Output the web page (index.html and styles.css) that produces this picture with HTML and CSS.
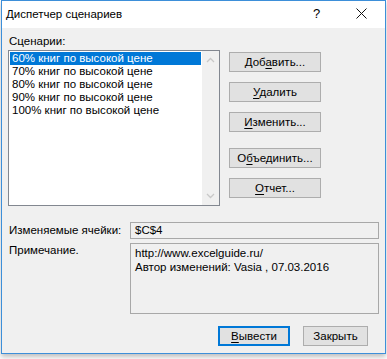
FILE: index.html
```html
<!DOCTYPE html>
<html lang="ru">
<head>
	<meta charset="UTF-8">
	<title>Диспетчер сценариев</title>
	<link rel="stylesheet" href="styles.css">
</head>
<body>
	<div class="window">
		<div class="titlebar">
			<span class="title">Диспетчер сценариев</span>
			<span class="help">?</span>
			<span class="close">
				<svg width="11" height="11" viewBox="0 0 11 11"><path d="M0.5 0.5L10.5 10.5M10.5 0.5L0.5 10.5" stroke="#111" stroke-width="1" fill="none"/></svg>
			</span>
		</div>
		<div class="content">
			<div class="top">
				<div class="scen">
					<div class="label">Сценарии:</div>
					<div class="listbox">
						<ul class="items">
							<li class="selected">60% книг по высокой цене</li>
							<li>70% книг по высокой цене</li>
							<li>80% книг по высокой цене</li>
							<li>90% книг по высокой цене</li>
							<li>100% книг по высокой цене</li>
						</ul>
						<div class="scrollbar">
							<svg width="9" height="6" viewBox="0 0 9 6"><path d="M1 5L4.5 1.5L8 5" stroke="#c8c8c8" stroke-width="1.3" fill="none"/></svg>
							<svg width="9" height="6" viewBox="0 0 9 6"><path d="M1 1L4.5 4.5L8 1" stroke="#c8c8c8" stroke-width="1.3" fill="none"/></svg>
						</div>
					</div>
				</div>
				<div class="side-buttons">
					<button type="button">Доб<u>а</u>вить...</button>
					<button type="button"><u>У</u>далить</button>
					<button type="button"><u>И</u>зменить...</button>
					<button type="button" class="sep">О<u>б</u>ъединить...</button>
					<button type="button"><u>О</u>тчет...</button>
				</div>
			</div>
			<div class="field-row">
				<div class="field-label">Изменяемые ячейки:</div>
				<div class="field">$C$4</div>
			</div>
			<div class="field-row notes">
				<div class="field-label">Примечание.</div>
				<div class="field big">http://www.excelguide.ru/<br>Автор изменений: Vasia , 07.03.2016</div>
			</div>
			<div class="footer">
				<button type="button" class="default"><u>В</u>ывести</button>
				<button type="button" class="close-btn">Закрыть</button>
			</div>
		</div>
	</div>
</body>
</html>
```
FILE: styles.css
```css
/* Reset */
body,div,ul,li,span{ margin:0; padding:0;}
ul{ list-style:none;}
body{ background:#fff; font-family:"Liberation Sans",Arial,sans-serif; font-size:11.5px; color:#000; height:359px; overflow:hidden;}
u{ text-decoration:underline; text-underline-offset:2px;}

/* окно */
.window{
	margin-left: 1px;
	width: 385px;
	height: 354px;
	box-sizing: border-box;
	border: 1px solid #3d8fd9;
	background-color: #f0f0f0;
	box-shadow: 0 3px 5px rgba(0,0,0,0.25);
	display: flex;
	flex-direction: column;
}
.titlebar{
	height: 27px;
	background-color: #fff;
	display: flex;
	align-items: center;
	padding-left: 4px;
}
.title{
	flex: 1;
	line-height: 15px;
	padding-bottom: 1px;
}
.help{
	width: 10px;
	margin-right: 33px;
	font-size: 13px;
	padding-bottom: 2px;
}
.close{
	width: 11px;
	height: 11px;
	margin-right: 18px;
	margin-bottom: 2px;
	display: flex;
}
.content{
	flex: 1;
	padding: 6px 6px 0 6px;
}
/* верхняя часть */
.top{
	display: flex;
}
.label{
	line-height: 15px;
	height: 16px;
	padding-left: 1px;
}
.listbox{
	width: 212px;
	height: 156px;
	box-sizing: border-box;
	border: 1px solid #828790;
	background-color: #fff;
	display: flex;
}
.items{
	flex: 1;
	padding: 1px;
}
.items li{
	height: 13px;
	line-height: 13px;
	padding-left: 2px;
	white-space: nowrap;
}
.items li.selected{
	background-color: #0078d7;
	color: #fff;
}
.scrollbar{
	width: 17px;
	background-color: #f0f0f0;
	display: flex;
	flex-direction: column;
	justify-content: space-between;
	align-items: center;
	padding: 6px 0 6px;
}
.side-buttons{
	display: flex;
	flex-direction: column;
	gap: 10px;
	padding-top: 18px;
	margin-left: 9px;
}
button{
	font-family: inherit;
	font-size: 11.5px;
	color: #000;
	background-color: #e1e1e1;
	border: 1px solid #adadad;
	height: 20px;
	padding: 0;
	line-height: 16px;
	box-sizing: border-box;
}
.side-buttons button{
	width: 92px;
}
.side-buttons button.sep{
	margin-top: 6px;
}
/* поля */
.field-row{
	display: flex;
	margin-top: 16px;
}
.field-row.notes{
	margin-top: 4px;
}
.field-label{
	width: 122px;
	padding-left: 1px;
	box-sizing: border-box;
	line-height: 15px;
	padding-top: 1px;
	white-space: nowrap;
}
.notes .field-label{
	padding-top: 0;
}
.field{
	flex: 1;
	height: 17px;
	box-sizing: border-box;
	border: 1px solid #a8a8a8;
	padding: 0 4px;
	line-height: 15px;
}
.field.big{
	height: 71px;
	padding-top: 2px;
	line-height: 14px;
}
/* кнопки снизу */
.footer{
	display: flex;
	justify-content: flex-end;
	gap: 13px;
	margin-top: 12px;
	padding-right: 11px;
}
.footer .default{
	width: 72px;
	border: 2px solid #0078d7;
}
.footer .close-btn{
	width: 65px;
}
```
